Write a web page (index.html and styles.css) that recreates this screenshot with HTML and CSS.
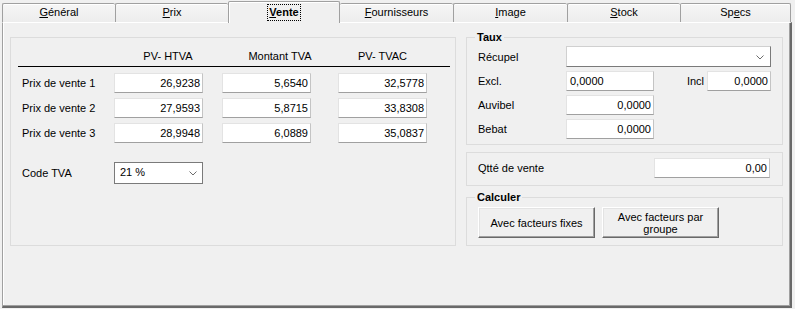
FILE: index.html
```html
<!DOCTYPE html>
<html>

<head>
    <meta http-equiv="Content-Type" content="text/html; charset=utf-8">
    <title>Article - Vente</title>
    <link rel="stylesheet" href="styles.css">
</head>

<body>
    <div class="tabs">
        <div class="tab t-general"><u>G</u>énéral</div>
        <div class="tab t-prix"><u>P</u>rix</div>
        <div class="tab t-vente active"><span class="focus"><u>V</u>ente</span></div>
        <div class="tab t-fourn"><u>F</u>ournisseurs</div>
        <div class="tab t-image"><u>I</u>mage</div>
        <div class="tab t-stock"><u>S</u>tock</div>
        <div class="tab t-specs">Sp<u>e</u>cs</div>
    </div>

    <div class="panel">
        <fieldset class="group prices">
            <div class="price-row head">
                <span></span>
                <span class="col-head">PV- HTVA</span>
                <span class="col-head">Montant TVA</span>
                <span class="col-head">PV- TVAC</span>
            </div>
            <div class="price-row">
                <span class="lbl">Prix de vente 1</span>
                <div class="field num">26,9238</div>
                <div class="field num">5,6540</div>
                <div class="field num">32,5778</div>
            </div>
            <div class="price-row">
                <span class="lbl">Prix de vente 2</span>
                <div class="field num">27,9593</div>
                <div class="field num">5,8715</div>
                <div class="field num">33,8308</div>
            </div>
            <div class="price-row">
                <span class="lbl">Prix de vente 3</span>
                <div class="field num">28,9948</div>
                <div class="field num">6,0889</div>
                <div class="field num">35,0837</div>
            </div>
            <div class="price-row tva">
                <span class="lbl">Code TVA</span>
                <div class="combo dark">
                    <span>21 %</span>
                    <svg width="8" height="5" viewBox="0 0 8 5"><polyline points="0.5,0.5 4,4 7.5,0.5" fill="none" stroke="#6d6d6d" stroke-width="1"/></svg>
                </div>
            </div>
        </fieldset>

        <div class="side">
            <fieldset class="group taux">
                <legend>Taux</legend>
                <div class="form-row">
                    <span class="lbl">Récupel</span>
                    <div class="combo light">
                        <span></span>
                        <svg width="8" height="5" viewBox="0 0 8 5"><polyline points="0.5,0.5 4,4 7.5,0.5" fill="none" stroke="#6d6d6d" stroke-width="1"/></svg>
                    </div>
                </div>
                <div class="form-row">
                    <span class="lbl">Excl.</span>
                    <div class="field rate left">0,0000</div>
                    <span class="incl">Incl</span>
                    <div class="field incl-field num">0,0000</div>
                </div>
                <div class="form-row">
                    <span class="lbl">Auvibel</span>
                    <div class="field rate num">0,0000</div>
                </div>
                <div class="form-row">
                    <span class="lbl">Bebat</span>
                    <div class="field rate num">0,0000</div>
                </div>
            </fieldset>

            <fieldset class="group qty">
                <div class="form-row">
                    <span class="lbl">Qtté de vente</span>
                    <div class="field qty-field num">0,00</div>
                </div>
            </fieldset>

            <fieldset class="group calc">
                <legend>Calculer</legend>
                <div class="buttons">
                    <button>Avec facteurs fixes</button>
                    <button>Avec facteurs par<br>groupe</button>
                </div>
            </fieldset>
        </div>
    </div>
</body>
</html>
```

FILE: styles.css
```css
body {
    margin: 0;
    background: #f0f0f0;
    font: 11px "Liberation Sans", Arial, sans-serif;
    color: #000;
}

/* tab strip */

.tabs {
    display: flex;
    align-items: flex-end;
    height: 22px;
    padding-left: 2px;
}

.tab {
    box-sizing: border-box;
    width: 113px;
    height: 19px;
    border: 1px solid #a0a0a0;
    border-right: none;
    border-bottom: none;
    border-radius: 2px 2px 0 0;
    background: linear-gradient(#f6f6f6, #ededed);
    box-shadow: inset 0 1px 0 #fff;
    text-align: center;
    line-height: 17px;
}

.t-vente {
    width: 112px;
}

.t-image {
    width: 114px;
}

.t-specs {
    width: 111px;
    border-right: 1px solid #a0a0a0;
}

.tab.active {
    position: relative;
    z-index: 1;
    height: 22px;
    margin-bottom: -1px;
    border-right: 1px solid #a0a0a0;
    background: #f0f0f0;
    box-shadow: inset 1px 1px 0 #fff;
    font-weight: bold;
    line-height: 20px;
}

.tab.active + .tab {
    border-left: none;
}

.focus {
    display: inline-block;
    line-height: 13px;
    padding: 1px 1px 1px 1px;
    outline: 1px dotted #000;
    outline-offset: 0;
}

/* panel */

.panel {
    box-sizing: border-box;
    width: 790px;
    height: 286px;
    margin-left: 2px;
    padding: 14px 0 0 7px;
    border-top: 1px solid #fff;
    border-left: 1px solid #a0a0a0;
    border-right: 2px solid #696969;
    border-bottom: 2px solid #696969;
    box-shadow: inset -1px -1px 0 #a0a0a0, inset 1px 0 0 #fff;
    display: grid;
    grid-template-columns: 446px 317px;
    column-gap: 10px;
    align-items: start;
}

.group {
    margin: 0;
    min-width: 0;
    border: 1px solid #dcdcdc;
}

.group legend {
    font-weight: bold;
    line-height: 14px;
    padding: 0 2px;
    margin-left: -3px;
}

/* price table */

.prices {
    box-sizing: border-box;
    height: 209px;
    padding: 0 5px 0 7px;
}

.price-row {
    display: grid;
    grid-template-columns: 92px 108px 116px 89px;
    align-items: center;
    padding-left: 4px;
    height: 20px;
    margin-top: 5px;
}

.price-row.head {
    height: auto;
    margin-top: 11px;
    line-height: 14px;
    padding-bottom: 3px;
    border-bottom: 1px solid #000;
}

.price-row.head + .price-row {
    margin-top: 6px;
}

.price-row.tva {
    height: 22px;
    margin-top: 19px;
}

.col-head {
    text-align: center;
}

.field {
    box-sizing: border-box;
    width: 89px;
    height: 20px;
    background: #fff;
    border: 1px solid;
    border-color: #e3e3e3 #c4c4c4 #a0a0a0 #e3e3e3;
    line-height: 18px;
    padding: 0 2px 0 3px;
    white-space: nowrap;
}

.num {
    text-align: right;
}

.combo {
    box-sizing: border-box;
    height: 22px;
    width: 89px;
    background: #fff;
    border: 1px solid #7a7a7a;
    display: flex;
    align-items: center;
    justify-content: space-between;
    padding: 0 5px 2px 5px;
}

.combo svg {
    margin-top: 3px;
}

.combo.light {
    width: 205px;
    height: 21px;
    border-color: #d0d0d0 #7a7a7a #7a7a7a #d0d0d0;
    padding-right: 6px;
}

/* right column */

.side {
    display: flex;
    flex-direction: column;
    margin-top: -7px;
}

.taux {
    padding: 2px 11px 5px 11px;
}

.form-row {
    display: flex;
    align-items: center;
    height: 20px;
    margin-top: 4px;
}

.form-row:first-of-type {
    height: 21px;
}

.taux legend + .form-row {
    margin-top: 0;
}

.form-row .lbl {
    width: 88px;
    flex: none;
}

.rate {
    width: 88px;
}

.incl {
    margin-left: auto;
    margin-right: 3px;
}

.incl-field {
    width: 64px;
}

.qty {
    margin-top: 7px;
    padding: 4px 12px 7px 11px;
}

.qty .form-row {
    margin-top: 0;
}

.qty-field {
    width: 116px;
    margin-left: auto;
}

.calc {
    margin-top: 4px;
    padding: 3px 11px 7px 11px;
}

.buttons {
    display: flex;
    gap: 7px;
}

.buttons button {
    box-sizing: border-box;
    width: 117px;
    height: 31px;
    padding: 0;
    font: inherit;
    line-height: 12px;
    color: #000;
    background: #f0f0f0;
    border: 1px solid;
    border-color: #fff #696969 #696969 #fff;
    box-shadow: inset -1px -1px 0 #a0a0a0, inset 1px 1px 0 #e3e3e3;
}
```
